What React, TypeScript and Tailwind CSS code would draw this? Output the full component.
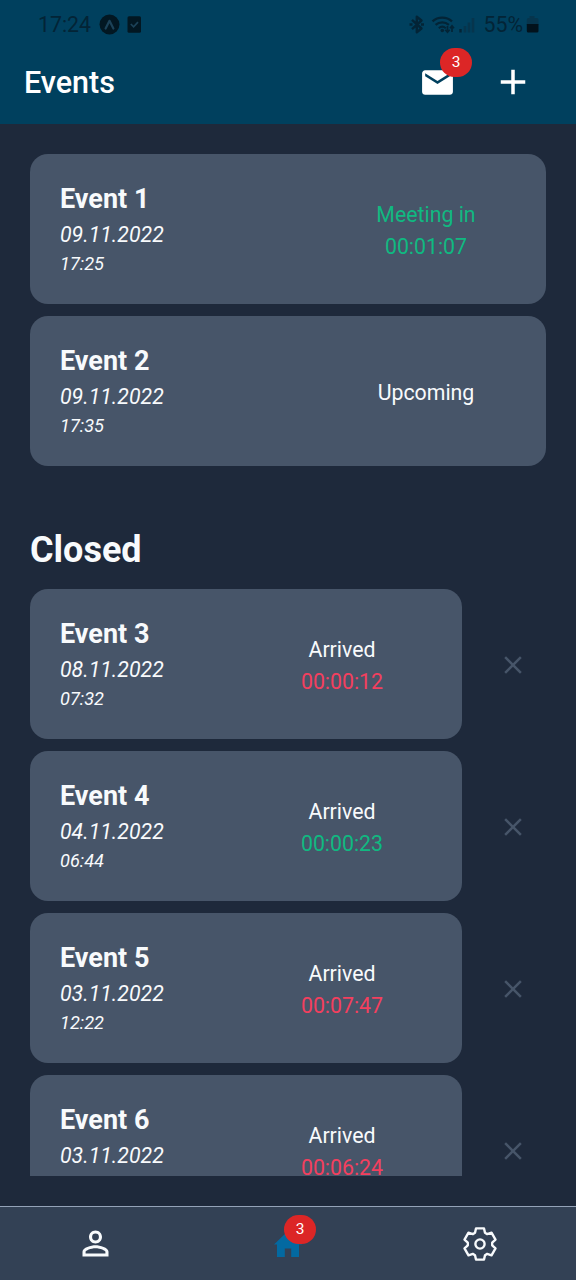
import type { ReactNode } from "react";
import { MdAdd, MdClose, MdMail, MdPersonOutline } from "react-icons/md";

type EventItem = {
  title: string;
  date: string;
  time: string;
  status: string;
  timer?: string;
  tone: "good" | "bad" | "plain";
};

const upcoming: EventItem[] = [
  { title: "Event 1", date: "09.11.2022", time: "17:25", status: "Meeting in", timer: "00:01:07", tone: "good" },
  { title: "Event 2", date: "09.11.2022", time: "17:35", status: "Upcoming", tone: "plain" },
];

const closed: EventItem[] = [
  { title: "Event 3", date: "08.11.2022", time: "07:32", status: "Arrived", timer: "00:00:12", tone: "bad" },
  { title: "Event 4", date: "04.11.2022", time: "06:44", status: "Arrived", timer: "00:00:23", tone: "good" },
  { title: "Event 5", date: "03.11.2022", time: "12:22", status: "Arrived", timer: "00:07:47", tone: "bad" },
  { title: "Event 6", date: "03.11.2022", time: "", status: "Arrived", timer: "00:06:24", tone: "bad" },
];

const toneClass = {
  good: "text-[#10b981]",
  bad: "text-[#f43f5e]",
  plain: "text-[#f8fafc]",
};

function Badge({ className, children }: { className: string; children: ReactNode }) {
  return (
    <span
      className={`absolute flex h-[29px] w-8 items-center justify-center rounded-full bg-[#dc2626] pt-px text-[15.5px] leading-none text-white ${className}`}
    >
      {children}
    </span>
  );
}

function EventCard({ event, className = "" }: { event: EventItem; className?: string }) {
  return (
    <div className={`flex h-[150px] items-stretch rounded-[18px] bg-[#475569] px-[30px] text-[#f8fafc] ${className}`}>
      <div className="flex flex-1 flex-col pt-6">
        <h2 className="text-[27px] leading-[42px] font-bold">{event.title}</h2>
        <p className="text-[21.3px] leading-[29px] italic">{event.date}</p>
        <p className="text-[18.2px] leading-[30px] italic">{event.time}</p>
      </div>
      <div className="flex w-[180px] flex-col items-center justify-center pt-[3px] text-[21.3px] leading-[32px]">
        <span className={event.timer && event.status !== "Arrived" ? toneClass[event.tone] : "text-[#f8fafc]"}>
          {event.status}
        </span>
        {event.timer && <span className={toneClass[event.tone]}>{event.timer}</span>}
      </div>
    </div>
  );
}

function HomeIcon() {
  return (
    <svg width="28" height="26" viewBox="0 0 28 26" fill="currentColor">
      <path d="M0 13.500 14 0l14 13.500h-3V26h-7.800v-8.500h-6.400V26H3V13.500z" />
    </svg>
  );
}

function GearIcon() {
  return (
    <svg width="36" height="36" viewBox="-18 -18 36 36" fill="none" stroke="currentColor" strokeWidth="2.4" strokeLinejoin="round">
      <path d="M-5-11.200-4-15.600H4L5-11.200 7.200-9.900 11.500-11.300 15.500-4.300 12.200-1.300V1.300L15.500 4.300 11.500 11.300 7.200 9.900 5 11.200 4 15.600H-4L-5 11.200-7.200 9.900-11.500 11.300-15.500 4.300-12.200 1.300V-1.300L-15.500-4.300-11.500-11.300-7.200-9.900z" />
      <circle r="4.600" />
    </svg>
  );
}

function StatusBar() {
  return (
    <div className="flex h-[42px] items-start pt-[12px] pr-[37px] pl-[38px] text-[21.3px] leading-[25px] text-[#032436]">
      <span>17:24</span>
      <svg className="mt-[2px] ml-[8px]" width="21" height="21" viewBox="0 0 21 21">
        <circle cx="10.5" cy="10.5" r="10" fill="#021722" />
        <path d="M6.600 14.500 10.500 6.800l3.900 7.700" fill="none" stroke="#1c4258" strokeWidth="2.200" strokeLinecap="round" strokeLinejoin="round" />
      </svg>
      <svg className="mt-[4px] ml-[7px]" width="15" height="17" viewBox="0 0 15 17">
        <rect x="0.5" y="0.3" width="13.500" height="16.400" rx="1.500" fill="#021722" />
        <path d="m3.800 8 2.800 2.800 4.400-4.600" fill="none" stroke="#1c4258" strokeWidth="1.700" />
      </svg>
      <div className="flex-1" />
      <svg className="mt-[3px]" width="68" height="20" viewBox="0 0 68 20" fill="none" stroke="#032436">
        <path d="m3 4.800 9.500 8.700-4.700 3.700V1.800l4.700 3.700L3 14.200" strokeWidth="2.400" strokeLinejoin="round" />
        <path d="M.5 9.500h3M12 9.500h3" strokeWidth="2.600" />
        <path d="M23.500 6.300c5.500-5 14-5 19.500 0" strokeWidth="2.300" />
        <path d="M26.600 9.900c3.800-3.500 9.500-3.500 13.300 0" strokeWidth="2.200" />
        <path d="M29.800 13.200c2.200-2 4.800-2 7 0" strokeWidth="2" />
        <circle cx="33.300" cy="15.500" r="1.800" fill="#032436" stroke="none" />
        <path d="M38.500 11v6m-2.200-2.200 2.200 2.400 2.200-2.400M43 17v-6m-2 2.200 2-2.400 2 2.400" strokeWidth="1.700" />
        <path d="M51.500 14v3.500" strokeWidth="2.400" />
        <path d="M56 11v6.500M60 7.500v10M64 3v14.500" stroke="#06354d" strokeWidth="2.600" />
      </svg>
      <span className="ml-[6px]">55%</span>
      <svg className="mt-[4px] ml-[3px]" width="13" height="17" viewBox="0 0 13 17">
        <path d="M3.500 0h5v2H11a1.500 1.500 0 0 1 1.500 1.500V9H.8V3.500A1.500 1.500 0 0 1 2.300 2h1.200z" fill="#06354d" />
        <path d="M.8 8h11.700v7a1.500 1.500 0 0 1-1.500 1.500H2.300A1.500 1.500 0 0 1 .8 15z" fill="#02121c" />
      </svg>
    </div>
  );
}

export default function App() {
  return (
    <div className="flex h-[1280px] w-[576px] flex-col overflow-hidden bg-[#1e293b] font-['Roboto',sans-serif]">
      <header className="h-[124px] shrink-0 bg-[#00405e]">
        <StatusBar />
        <div className="flex h-[81px] items-center pr-[42px] pl-6 text-white">
          <h1 className="flex-1 pt-px text-[30.5px] leading-none font-medium">Events</h1>
          <button className="relative mr-[36px] mb-px" aria-label="Messages">
            <MdMail className="size-[37px]" />
            <Badge className="-top-[16px] left-[21px]">3</Badge>
          </button>
          <button className="mb-px" aria-label="Add event">
            <MdAdd className="size-[42px]" />
          </button>
        </div>
      </header>

      <main className="flex min-h-0 flex-1 flex-col p-[30px]">
        <div className="min-h-0 flex-1 overflow-hidden">
          <section className="flex flex-col gap-3">
            {upcoming.map((event) => (
              <EventCard key={event.title} event={event} />
            ))}
          </section>
          <h2 className="mt-[60px] mb-[15px] text-[36px] leading-[48px] font-bold text-[#f8fafc]">Closed</h2>
          <section className="flex flex-col gap-3">
            {closed.map((event) => (
              <div key={event.title} className="flex items-center">
                <EventCard event={event} className="w-[432px]" />
                <button className="mt-0.5 ml-[18px] flex w-[66px] justify-center text-[#475569]" aria-label={`Remove ${event.title}`}>
                  <MdClose className="size-[30px]" />
                </button>
              </div>
            ))}
          </section>
        </div>
      </main>

      <nav className="grid h-[74px] shrink-0 grid-cols-3 items-center justify-items-center border-t border-[#94a3b8] bg-[#334155] text-[#f8fafc]">
        <MdPersonOutline className="mr-px size-[39px]" />
        <div className="relative text-[#0369a1]">
          <HomeIcon />
          <Badge className="-top-[16px] left-[10px]">3</Badge>
        </div>
        <GearIcon />
      </nav>
    </div>
  );
}
